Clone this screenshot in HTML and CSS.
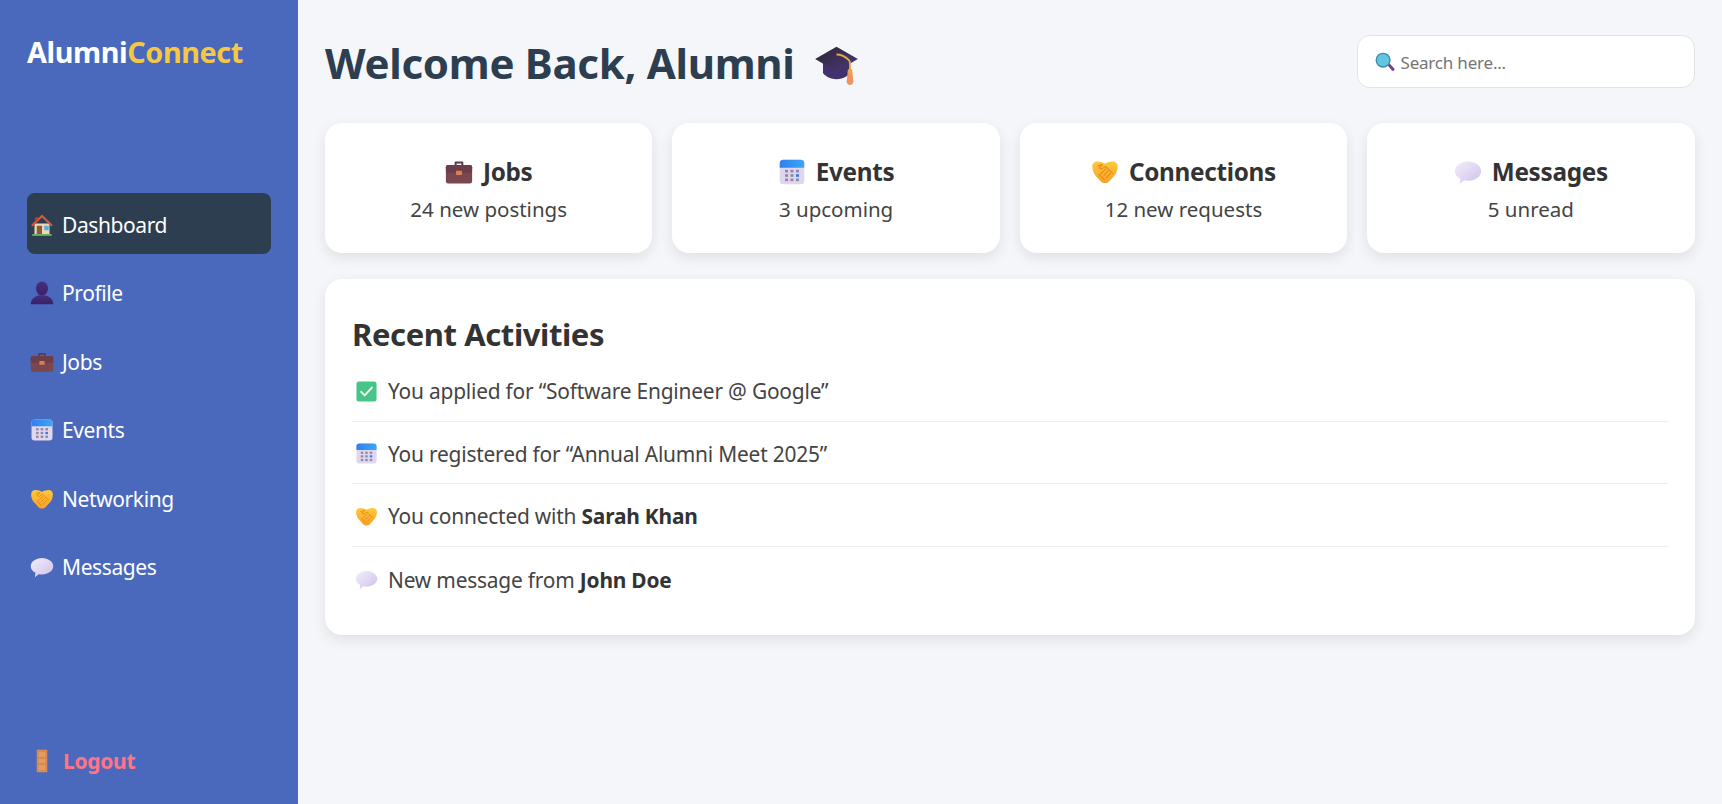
FILE: index.html
```html
<!DOCTYPE html>
<html lang="en">
<head>
<meta charset="utf-8">
<title>AlumniConnect Dashboard</title>
<link rel="stylesheet" href="styles.css">
</head>
<body>
<svg class="sprite" xmlns="http://www.w3.org/2000/svg" aria-hidden="true">
  <defs>
    <linearGradient id="gCal" x1="0" y1="0" x2="1" y2="0"><stop offset="0" stop-color="#2f7ff0"/><stop offset="1" stop-color="#3ea6f5"/></linearGradient>
    <linearGradient id="gHand" x1="0" y1="0" x2="0" y2="1"><stop offset="0" stop-color="#ffc83d"/><stop offset="1" stop-color="#f7a12a"/></linearGradient>
    <linearGradient id="gBubble" x1="0" y1="0" x2="1" y2="1"><stop offset="0" stop-color="#f3eefb"/><stop offset="1" stop-color="#cfc0ea"/></linearGradient>
    <linearGradient id="gCap" x1="0" y1="0" x2="1" y2="1"><stop offset="0" stop-color="#2e2433"/><stop offset="1" stop-color="#4a3a78"/></linearGradient>
    <linearGradient id="gPerson" x1="0" y1="0" x2="0" y2="1"><stop offset="0" stop-color="#46307a"/><stop offset="1" stop-color="#3b1f6e"/></linearGradient>
  </defs>
  <symbol id="i-house" viewBox="0 0 32 32">
    <path d="M6 14h20v14H6z" fill="#eed7b4"/>
    <path d="M16 2 1.500 16l2 2L16 6l12.500 12 2-2z" fill="#d9573a"/>
    <path d="M7 6h4v3l-4 4z" fill="#b9492f"/>
    <path d="M9 17h7v11H9z" fill="#8a5a3c"/>
    <path d="M19 17h6v6h-6z" fill="#4fb4e4"/>
    <path d="M3 28h26v2.500H3z" fill="#6fae5c"/>
  </symbol>
  <symbol id="i-person" viewBox="0 0 32 32">
    <ellipse cx="16" cy="10" rx="8" ry="9.500" fill="url(#gPerson)"/>
    <path d="M1 31c0-7 5-10 11-12h8c6 2 11 5 11 12z" fill="url(#gPerson)"/>
  </symbol>
  <symbol id="i-brief" viewBox="0 0 32 32">
    <path d="M11 9V5.500C11 4.500 11.700 4 12.500 4h7c.800 0 1.500.500 1.500 1.500V9h-2.300V6.300h-5.400V9z" fill="#5d3a44"/>
    <rect x="1" y="8" width="30" height="21" rx="2.500" fill="#7a4650"/>
    <rect x="1" y="8" width="30" height="9" rx="2.500" fill="#6c3e49"/>
    <rect x="12.500" y="14.500" width="7" height="5" rx=".8" fill="#d97f50"/>
  </symbol>
  <symbol id="i-cal" viewBox="0 0 32 32">
    <rect x="2" y="2" width="28" height="28" rx="4" fill="#e0d6ee"/>
    <path d="M2 11V6a4 4 0 0 1 4-4h20a4 4 0 0 1 4 4v5z" fill="url(#gCal)"/>
    <g fill="#8f88a8">
      <rect x="8" y="13.500" width="3.500" height="3"/><rect x="14.200" y="13.500" width="3.500" height="3"/><rect x="20.500" y="13.500" width="3.500" height="3"/>
      <rect x="8" y="18.500" width="3.500" height="3"/><rect x="14.200" y="18.500" width="3.500" height="3"/>
      <rect x="8" y="23.500" width="3.500" height="3"/><rect x="14.200" y="23.500" width="3.500" height="3"/><rect x="20.500" y="23.500" width="3.500" height="3"/>
    </g>
    <rect x="20.500" y="18.500" width="3.500" height="3" fill="#2f7ff0"/>
  </symbol>
  <symbol id="i-hands" viewBox="0 0 32 32">
    <path d="M1.500 9.500C1.500 6.500 4 4 7 4c3.500 0 6.500 1 9 2.500C18.500 5 21.500 4 25 4c3 0 5.500 2.500 5.500 5.500 0 4.500-1.500 8.500-4.500 11.500l-5 5.500c-2.700 2.800-7.300 2.800-10 0L6 21C3 18 1.500 14 1.500 9.500z" fill="url(#gHand)"/>
    <path d="M8 9l5-1.500M13 7.500l-3.500 4 3 1 4-3 8.500 8M20 14.500l-5 5M17 12.500l-6 5.500M22.500 17.500l-5 5M9 18.500l6 6" fill="none" stroke="#e58a12" stroke-width="1.200" stroke-linecap="round" stroke-linejoin="round"/>
  </symbol>
  <symbol id="i-bubble" viewBox="0 0 32 32">
    <path d="M16 4c8 0 15 4.800 15 11s-7 11-15 11c-1.500 0-3-.200-4.300-.500L6.500 29.500l.800-5.800C3.300 21.500 1 18.500 1 15 1 8.800 8 4 16 4z" fill="url(#gBubble)"/>
  </symbol>
  <symbol id="i-door" viewBox="0 0 32 32">
    <rect x="9" y="1" width="14" height="30" fill="#d98d50"/>
    <g fill="#e39b60" stroke="#c9834a" stroke-width=".6">
      <rect x="11" y="3.500" width="10" height="7.500"/><rect x="11" y="12.200" width="10" height="7.500"/><rect x="11" y="21" width="10" height="7.500"/>
    </g>
  </symbol>
  <symbol id="i-cap" viewBox="0 0 40 40">
    <path d="M8 18v10c0 2 6 6 12 6s12-4 12-6V18z" fill="#43306e"/>
    <path d="M20 5 39 16 20 27 1 16z" fill="url(#gCap)"/>
    <path d="M20 12c4 0 8 2 11 5 .800.800 1 1.500 1 3v7" fill="none" stroke="#e8a84a" stroke-width="1.700"/>
    <path d="M30 27h4l1 9c0 2-1.500 3-3 3s-3-1-3-3z" fill="#f0935c"/>
    <rect x="30" y="25" width="4" height="4" rx="1" fill="#e8a84a"/>
  </symbol>
  <symbol id="i-search" viewBox="0 0 32 32">
    <path d="M20 21l3-3 7.500 8c1 1 1 2.500 0 3.500s-2.500 1-3.500 0z" fill="#7b3f8c"/>
    <circle cx="13" cy="13" r="12" fill="#3d8fa8"/>
    <circle cx="13" cy="13" r="9.800" fill="#62c6e2"/>
  </symbol>
  <symbol id="i-check" viewBox="0 0 32 32">
    <rect x="2" y="2" width="28" height="28" rx="3.500" fill="#47c586"/>
    <path d="M8.500 16.500l5 5 10-11" fill="none" stroke="#f4fbf7" stroke-width="2.600" stroke-linecap="round" stroke-linejoin="round"/>
  </symbol>
</svg>

<div class="app">
  <aside class="sidebar">
    <div class="logo">Alumni<span class="logo-accent">Connect</span></div>
    <nav class="nav">
      <a class="nav-item active" href="#"><svg class="nav-icon"><use href="#i-house"/></svg>Dashboard</a>
      <a class="nav-item" href="#"><svg class="nav-icon"><use href="#i-person"/></svg>Profile</a>
      <a class="nav-item" href="#"><svg class="nav-icon"><use href="#i-brief"/></svg>Jobs</a>
      <a class="nav-item" href="#"><svg class="nav-icon"><use href="#i-cal"/></svg>Events</a>
      <a class="nav-item" href="#"><svg class="nav-icon"><use href="#i-hands"/></svg>Networking</a>
      <a class="nav-item" href="#"><svg class="nav-icon"><use href="#i-bubble"/></svg>Messages</a>
    </nav>
    <a class="logout" href="#"><svg class="nav-icon"><use href="#i-door"/></svg>Logout</a>
  </aside>

  <main class="main">
    <header class="topbar">
      <h1 class="welcome">Welcome Back, Alumni<svg class="welcome-icon"><use href="#i-cap"/></svg></h1>
      <label class="search">
        <svg class="search-icon"><use href="#i-search"/></svg>
        <input class="search-input" type="text" placeholder="Search here...">
      </label>
    </header>

    <section class="stats">
      <div class="stat">
        <h3 class="stat-title"><svg class="stat-icon"><use href="#i-brief"/></svg>Jobs</h3>
        <p class="stat-sub">24 new postings</p>
      </div>
      <div class="stat">
        <h3 class="stat-title"><svg class="stat-icon"><use href="#i-cal"/></svg>Events</h3>
        <p class="stat-sub">3 upcoming</p>
      </div>
      <div class="stat">
        <h3 class="stat-title"><svg class="stat-icon"><use href="#i-hands"/></svg>Connections</h3>
        <p class="stat-sub">12 new requests</p>
      </div>
      <div class="stat">
        <h3 class="stat-title"><svg class="stat-icon"><use href="#i-bubble"/></svg>Messages</h3>
        <p class="stat-sub">5 unread</p>
      </div>
    </section>

    <section class="activities">
      <h2 class="activities-title">Recent Activities</h2>
      <ul class="activity-list">
        <li class="activity"><svg class="activity-icon"><use href="#i-check"/></svg><span>You applied for “Software Engineer @ Google”</span></li>
        <li class="activity"><svg class="activity-icon"><use href="#i-cal"/></svg><span>You registered for “Annual Alumni Meet 2025”</span></li>
        <li class="activity"><svg class="activity-icon"><use href="#i-hands"/></svg><span>You connected with <strong>Sarah Khan</strong></span></li>
        <li class="activity"><svg class="activity-icon"><use href="#i-bubble"/></svg><span>New message from <strong>John Doe</strong></span></li>
      </ul>
    </section>
  </main>
</div>
</body>
</html>
```
FILE: styles.css
```css
* { box-sizing: border-box; }
html, body { height: 100%; }
body {
  margin: 0;
  font-family: "Noto Sans", "Open Sans", "Liberation Sans", sans-serif;
  background: #f4f6f9;
  color: #333;
  overflow: hidden;
}
.sprite { width: 0; height: 0; display: block; overflow: hidden; }
.app { display: flex; height: 804px; }

.sidebar {
  width: 298px;
  flex: none;
  background: #4a69bd;
  color: #fff;
  padding: 0 27px 28px;
  display: flex;
  flex-direction: column;
}
.logo {
  font-size: 28.800px;
  font-weight: 700;
  line-height: 38px;
  margin-top: 33px;
  letter-spacing: -0.4px;
}
.logo-accent { color: #f6c744; }
.nav { display: flex; flex-direction: column; gap: 7.600px; margin-top: 122px; }
.nav-item {
  display: flex;
  align-items: center;
  gap: 8px;
  height: 61px;
  padding: 2px 0 0 3px;
  border-radius: 8px;
  color: #fff;
  font-size: 21px;
  text-decoration: none;
  letter-spacing: -0.4px;
}
.nav-item.active { background: #2c3e50; }
.nav-icon { width: 24px; height: 24px; flex: none; }
.logout {
  margin-top: auto;
  display: flex;
  align-items: center;
  gap: 9px;
  padding-left: 3px;
  line-height: 30px;
  color: #ff7585;
  font-size: 21px;
  font-weight: 700;
  text-decoration: none;
  letter-spacing: -0.3px;
}

.main { flex: 1; min-width: 0; padding: 35px 27.500px 0 27px; }
.topbar { display: flex; justify-content: space-between; align-items: center; height: 53px; margin-bottom: 35px; }
.welcome {
  margin: 0;
  padding-top: 3px;
  display: flex;
  align-items: center;
  font-size: 42px;
  line-height: 58px;
  font-weight: 700;
  color: #2c3e50;
  letter-spacing: -0.3px;
}
.welcome-icon { width: 45px; height: 45px; margin-left: 19px; }
.search {
  width: 338px;
  height: 53px;
  display: flex;
  align-items: center;
  gap: 6px;
  padding: 0 17px;
  background: #fff;
  border: 1px solid #e0e3e8;
  border-radius: 13px;
}
.search-icon { width: 20px; height: 20px; flex: none; }
.search-input {
  flex: 1;
  min-width: 0;
  padding: 2px 0 0;
  border: 0;
  outline: 0;
  background: transparent;
  font: inherit;
  font-size: 17px;
  color: #333;
  letter-spacing: -0.2px;
}
.search-input::placeholder { color: #757575; opacity: 1; }

.stats { display: grid; grid-template-columns: repeat(4, 1fr); gap: 20px; margin-bottom: 26px; }
.stat {
  height: 130px;
  background: #fff;
  border-radius: 17px;
  box-shadow: 0 5px 14px rgba(0, 0, 0, 0.09);
  display: flex;
  flex-direction: column;
  align-items: center;
  padding-top: 31px;
  text-align: center;
}
.stat-title {
  margin: 0;
  display: flex;
  align-items: center;
  gap: 10px;
  font-size: 24.300px;
  line-height: 36px;
  font-weight: 700;
  color: #333;
  letter-spacing: -0.3px;
}
.stat-icon { width: 28px; height: 28px; flex: none; }
.stat-sub { margin: 4px 0 0; font-size: 20.500px; line-height: 30px; color: #444; }

.activities {
  background: #fff;
  border-radius: 17px;
  box-shadow: 0 5px 14px rgba(0, 0, 0, 0.09);
  padding: 33px 27px 0;
  height: 356px;
}
.activities-title {
  margin: 0 0 3px;
  font-size: 31px;
  line-height: 44px;
  font-weight: 700;
  color: #333;
  letter-spacing: -0.4px;
}
.activity-list { list-style: none; margin: 0; padding: 0; }
.activity {
  display: flex;
  align-items: center;
  gap: 10px;
  height: 62.600px;
  padding: 3px 0 0 3px;
  font-size: 20.900px;
  color: #444;
  border-bottom: 1px solid #eee;
  letter-spacing: -0.2px;
}
.activity:last-child { border-bottom: 0; }
.activity strong { font-weight: 700; color: #333; }
.activity-icon { width: 23px; height: 23px; flex: none; }
```
